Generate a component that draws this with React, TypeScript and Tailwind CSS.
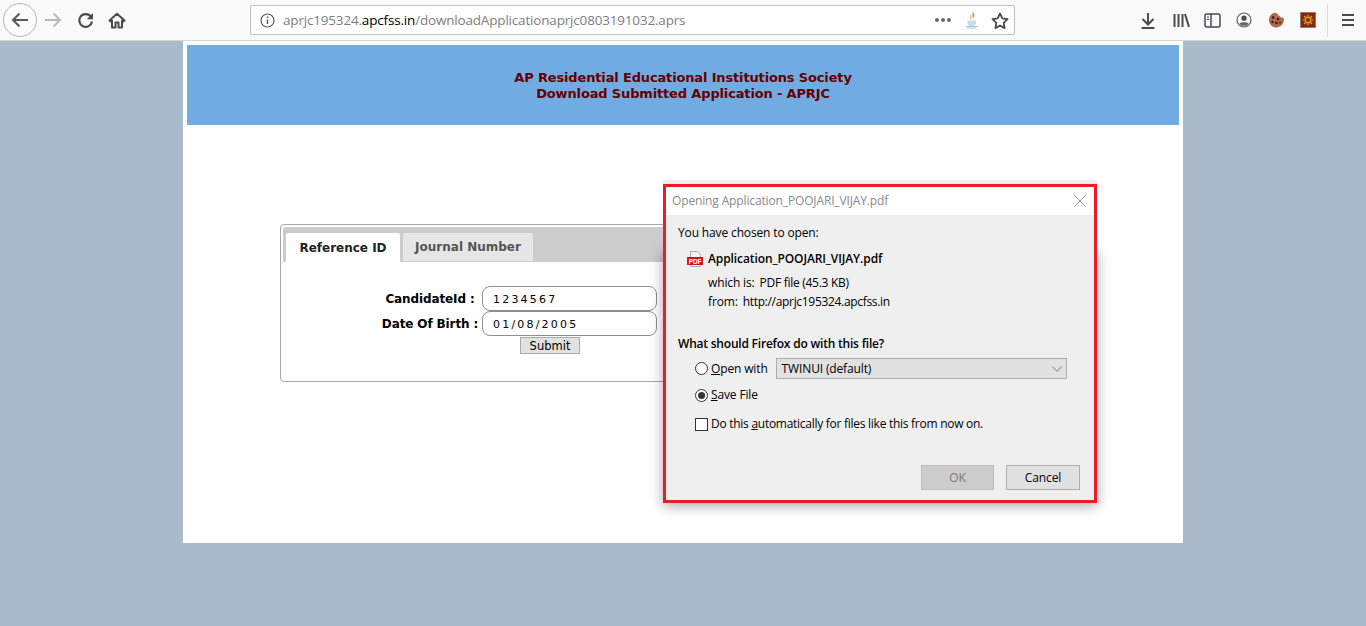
import { ChevronDown, X } from 'lucide-react';

const ui = "font-['Open_Sans',sans-serif]";
const verdana = "font-['DejaVu_Sans',sans-serif]";

function Toolbar() {
  return (
    <div className={`flex h-[41px] items-center border-b border-[#d6d6d6] bg-[#f9f9fa] ${ui}`}>
      <div className="ml-[3px] flex h-[34px] w-[34px] items-center justify-center rounded-full border border-[#b5b5b5] bg-[#fbfbfb]">
        <svg width="18" height="16" viewBox="0 0 18 16" fill="none" stroke="#58585b" strokeWidth="2">
          <path d="M17 8H2M8.5 1.5 2 8l6.5 6.5" />
        </svg>
      </div>
      <svg className="ml-[7px]" width="18" height="16" viewBox="0 0 18 16" fill="none" stroke="#b9b9ba" strokeWidth="2">
        <path d="M1 8h15M9.5 1.5 16 8l-6.5 6.5" />
      </svg>
      <svg className="ml-[15px]" width="17" height="17" viewBox="0 0 17 17" fill="none">
        <path d="M14.2 5.2A6.4 6.4 0 1 0 15 9.5" stroke="#4a4a4f" strokeWidth="2.2" />
        <path d="M16 1v6.2H9.8z" fill="#4a4a4f" />
      </svg>
      <svg className="ml-[14px]" width="18" height="17" viewBox="0 0 18 17" fill="none">
        <path d="M1.500 8.500 9 1.800l7.500 6.700-1.200 1-1.300-1V15.500h-3.500v-5h-3v5H4V8.500l-1.300 1z" stroke="#4a4a4f" strokeWidth="2" strokeLinejoin="round" />
      </svg>
      <div className="ml-[124px] flex h-[30px] w-[765px] items-center rounded-[2px] border border-[#bfbfc1] bg-white">
        <svg className="ml-[9px]" width="15" height="15" viewBox="0 0 15 15" fill="none" stroke="#5b5b5f" strokeWidth="1.200">
          <circle cx="7.500" cy="7.500" r="6.500" />
          <path d="M7.500 6.500v4.500M7.500 3.600v1.500" strokeWidth="1.500" />
        </svg>
        <div className="ml-[8px] whitespace-nowrap text-[13.5px] tracking-[-0.18px] text-[#7e7e82]">
          aprjc195324.<span className="text-black">apcfss.in</span>/downloadApplicationaprjc0803191032.aprs
        </div>
        <div className="ml-auto flex gap-[2px]">
          <span className="h-[4px] w-[4px] rounded-full bg-[#6a6a6e]" />
          <span className="h-[4px] w-[4px] rounded-full bg-[#6a6a6e]" />
          <span className="h-[4px] w-[4px] rounded-full bg-[#6a6a6e]" />
        </div>
        <svg className="ml-[13px]" width="16" height="18" viewBox="0 0 16 18" fill="none">
          <path d="M9 1C7 3.500 10 4.500 7.500 7.500 10.500 6 11.500 4 9 1z" fill="#e98a4f" />
          <path d="M7 4C5.500 6 7.500 7 7 8.500" stroke="#ef9f6f" />
          <path d="M3.500 9.500h8.500v3a3.500 3.500 0 0 1-3.500 2.500h-1.500a3.500 3.500 0 0 1-3.500-2.500z" fill="#c9dbe6" />
          <path d="M1.500 15.500h12.500M3 17h9" stroke="#a8c5d6" />
        </svg>
        <svg className="ml-[11px] mr-[5px]" width="18" height="17" viewBox="0 0 18 17" fill="none">
          <path d="M9 1.500l2.300 4.900 5.200.7-3.800 3.700.9 5.300L9 13.500l-4.600 2.600.9-5.300L1.500 7.100l5.200-.7z" stroke="#4a4a4f" strokeWidth="1.800" strokeLinejoin="round" />
        </svg>
      </div>
      <svg className="ml-[125px]" width="16" height="17" viewBox="0 0 16 17" fill="none" stroke="#4a4a4f" strokeWidth="2">
        <path d="M8 1v11M2.500 7 8 12.500 13.500 7M1.500 16h13" />
      </svg>
      <svg className="ml-[17px]" width="17" height="15" viewBox="0 0 17 15" fill="none" stroke="#4a4a4f" strokeWidth="2">
        <path d="M1.500 1v13M5.500 1v13M9.500 1v13M12 1l4 13" />
      </svg>
      <svg className="ml-[14px]" width="17" height="15" viewBox="0 0 17 15" fill="none" stroke="#4a4a4f" strokeWidth="1.500">
        <rect x="1" y="1" width="15" height="13" rx="2" />
        <path d="M7 1v13" strokeWidth="1.500" />
        <path d="M3 4h2M3 6.500h2" strokeWidth="1" />
      </svg>
      <svg className="ml-[15px]" width="16" height="16" viewBox="0 0 16 16" fill="none" stroke="#5f5f63" strokeWidth="1.200">
        <circle cx="8" cy="8" r="7" />
        <circle cx="8" cy="6.200" r="2.600" fill="#4a4a4f" stroke="none" />
        <path d="M3.500 11.500c1-1.800 8-1.800 9 0l-1.500 2.300h-6z" fill="#6a6a6e" stroke="none" />
      </svg>
      <svg className="ml-[16px]" width="16" height="16" viewBox="0 0 16 16">
        <path d="M8 .5c.5 1 1 1.500 2 1.700.2 1.300 1 2 2.200 2 .1 1 1 1.600 3.300 1.500A7.500 7.500 0 1 1 8 .5z" fill="#b06a48" />
        <circle cx="5" cy="5.500" r="1.300" fill="#33201a" />
        <circle cx="10" cy="7" r="1.200" fill="#33201a" />
        <circle cx="4.500" cy="10" r="1.200" fill="#33201a" />
        <circle cx="8.500" cy="11" r="1.300" fill="#33201a" />
        <circle cx="12" cy="10.500" r=".9" fill="#33201a" />
      </svg>
      <div className="ml-[16px] flex h-[16px] w-[16px] items-center justify-center border border-[#8c8070] bg-[#8c2408]">
        <svg width="12" height="12" viewBox="0 0 12 12" fill="none" stroke="#dfa72e">
          <circle cx="6" cy="6" r="2.800" strokeWidth="1.400" />
          <path d="M6 .5v2M6 9.500v2M.5 6h2M9.500 6h2M2 2l1.500 1.500M8.500 8.500 10 10M10 2 8.500 3.500M3.500 8.500 2 10" strokeWidth="1.200" />
        </svg>
      </div>
      <div className="ml-[11px] h-[33px] w-px bg-[#dcdcdc]" />
      <div className="ml-[14px] flex w-[12px] flex-col gap-[3px]">
        <span className="h-[2px] bg-[#4a4a4f]" />
        <span className="h-[2px] bg-[#4a4a4f]" />
        <span className="h-[2px] bg-[#4a4a4f]" />
      </div>
    </div>
  );
}

function TabForm() {
  return (
    <div className={`ml-[93px] mt-[99px] h-[158px] w-[800px] rounded-[4px] border border-[#a6a6a6] p-[2px] ${verdana}`}>
      <div className="flex h-[35px] items-end rounded-t-[3px] bg-[#cccccc] pl-[3px]">
        <div className="flex h-[29px] w-[114px] items-center justify-center rounded-t-[2px] bg-white text-[12px] font-bold text-[#222222]">
          Reference ID
        </div>
        <div className="mb-px ml-[3px] flex h-[28px] w-[130px] items-center justify-center rounded-t-[2px] bg-[#e6e6e6] text-[12px] font-bold text-[#555555]">
          Journal Number
        </div>
      </div>
      <div className="ml-[95px] mt-[24px] grid grid-cols-[104px_175px] text-[12px] font-bold tracking-[-0.12px] text-black">
        <div className="flex h-[25px] items-center justify-center pt-px">CandidateId :</div>
        <input
          readOnly
          value="1234567"
          className="h-[25px] rounded-[8px] border border-[#8f8f8f] bg-white px-[10px] pt-[2px] text-[11px] font-normal tracking-[2.2px] text-black outline-none"
        />
        <div className="flex h-[25px] items-center justify-center pt-px">Date Of Birth :</div>
        <input
          readOnly
          value="01/08/2005"
          className="h-[25px] rounded-[8px] border border-[#8f8f8f] bg-white px-[10px] pt-[2px] text-[11px] font-normal tracking-[2.2px] text-black outline-none"
        />
        <button className="col-start-2 ml-[38px] mt-px h-[17px] w-[60px] border border-[#ababab] bg-[#e1e1e1] pt-[2px] text-[11.5px] font-normal leading-none tracking-normal text-black">
          Submit
        </button>
      </div>
    </div>
  );
}

function PdfIcon() {
  return (
    <svg width="16" height="16" viewBox="0 0 16 16">
      <path d="M3.500.5h7l3 3v4h-10z" fill="#f4f4f4" stroke="#a9a9a9" />
      <rect y="6" width="16" height="8" fill="#d2141c" />
      <path d="M3.500 14v1.500h10V14" fill="#f4f4f4" stroke="#a9a9a9" />
      <text x="8" y="12.600" textAnchor="middle" fontSize="6.500" fontWeight="700" fill="#fff" fontFamily="Liberation Sans, sans-serif">
        PDF
      </text>
    </svg>
  );
}

function Radio({ checked }: { checked?: boolean }) {
  return (
    <span className="flex h-[13px] w-[13px] items-center justify-center rounded-full border border-[#333333] bg-white">
      {checked && <span className="h-[7px] w-[7px] rounded-full bg-[#333333]" />}
    </span>
  );
}

function Dialog() {
  return (
    <div className={`absolute left-[480px] top-[139px] w-[434px] ${ui}`}>
      <div className="h-[4px] bg-[#efefef]" />
      {/* soft shadow only shows from the panel down */}
      <div className="absolute bottom-0 left-0 right-0 top-[69px] shadow-[0_3px_12px_rgba(0,0,0,0.35)]" />
      <div className="relative flex h-[319px] flex-col border-[3px] border-[#ed1c24] bg-[#efefef] text-[12px] tracking-[-0.14px] text-black">
        <div className="flex h-[28px] shrink-0 items-center justify-between bg-white pl-[6px] pr-[3px] text-[#8a8a8a]">
          <span>Opening Application_POOJARI_VIJAY.pdf</span>
          <X size={22} strokeWidth={0.8} color="#777777" />
        </div>
        <div className="pl-[12px] pt-[10px] leading-[16px]">
          <div>You have chosen to open:</div>
          <div className="ml-[9px] mt-[10px] flex items-center">
            <PdfIcon />
            <span className="ml-[5px] font-semibold tracking-[-0.1px]">Application_POOJARI_VIJAY.pdf</span>
          </div>
          <div className="ml-[30px] mt-[8px]">
            which is:<span className="ml-[5px] tracking-[-0.28px]">PDF file (45.3 KB)</span>
          </div>
          <div className="ml-[30px] mt-[3px]">
            from:<span className="ml-[5px] tracking-[-0.32px]">http://aprjc195324.apcfss.in</span>
          </div>
          <div className="mt-[26px] font-semibold tracking-[-0.21px]">What should Firefox do with this file?</div>
          <div className="ml-[17px] mt-[6px] flex h-[21px] items-center">
            <Radio />
            <span className="ml-[3px]">
              <u>O</u>pen with
            </span>
            <div className="ml-[8px] flex h-[21px] w-[291px] items-center justify-between border border-[#adadad] bg-[#e1e1e1] pl-[5px]">
              <span>TWINUI (default)</span>
              <ChevronDown size={18} strokeWidth={1} color="#555555" />
            </div>
          </div>
          <div className="ml-[17px] mt-[6px] flex h-[20px] items-center">
            <Radio checked />
            <span className="ml-[3px]">
              <u>S</u>ave File
            </span>
          </div>
          <div className="ml-[17px] mt-[9px] flex h-[20px] items-center">
            <span className="h-[13px] w-[13px] border border-[#333333] bg-white" />
            <span className="ml-[3px] tracking-[-0.27px]">
              Do this <u>a</u>utomatically for files like this from now on.
            </span>
          </div>
        </div>
        <div className="mt-auto flex justify-end gap-[12px] pb-[10px] pr-[14px]">
          <button className="h-[25px] w-[73px] border border-[#bfbfbf] bg-[#cccccc] text-[#7a7a7a]">OK</button>
          <button className="h-[25px] w-[74px] border border-[#adadad] bg-[#e1e1e1]">Cancel</button>
        </div>
      </div>
    </div>
  );
}

export default function App() {
  return (
    <div className="flex h-[626px] flex-col overflow-hidden bg-[#a9bacb]">
      <Toolbar />
      <div className="relative mx-auto h-[502px] w-[1000px] bg-white p-[4px]">
        <div className={`flex h-[80px] flex-col items-center justify-center bg-[#70abe2] pt-[2px] text-[13px] font-bold leading-[16px] tracking-[-0.15px] text-[#660000] ${verdana}`}>
          <div>AP Residential Educational Institutions Society</div>
          <div>Download Submitted Application - APRJC</div>
        </div>
        <TabForm />
        <Dialog />
      </div>
    </div>
  );
}
